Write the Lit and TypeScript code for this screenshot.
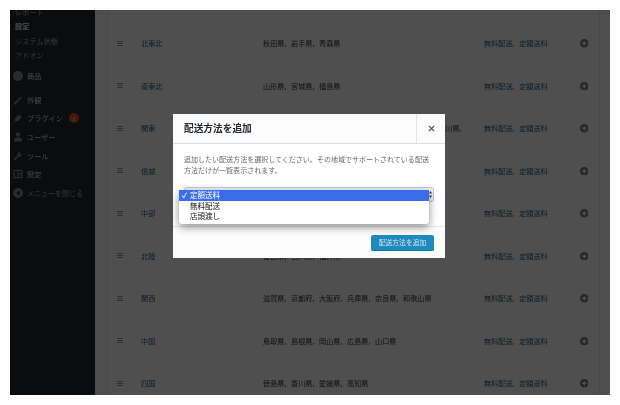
import { LitElement, html, css, svg } from "lit";
import { customElement } from "lit/decorators.js";

const rows: [string, string][] = [
  ["北東北", "秋田県, 岩手県, 青森県"],
  ["南東北", "山形県, 宮城県, 福島県"],
  ["関東", "茨城県, 栃木県, 群馬県, 埼玉県, 千葉県, 東京都, 神奈川県,"],
  ["信越", "新潟県, 長野県"],
  ["中部", "愛知県, 岐阜県, 静岡県, 三重県"],
  ["北陸", "富山県, 石川県, 福井県"],
  ["関西", "滋賀県, 京都府, 大阪府, 兵庫県, 奈良県, 和歌山県"],
  ["中国", "鳥取県, 島根県, 岡山県, 広島県, 山口県"],
  ["四国", "徳島県, 香川県, 愛媛県, 高知県"],
];

const icons: Record<string, unknown> = {
  product: svg`<circle cx="5" cy="5" r="5"/>`,
  brush: svg`<path d="M0.5 9.5 C1 7 2 6.5 3.2 6.3 L7.5 1.5 L8.8 2.7 L4.2 7.2 C4 8.6 2.5 9.6 0.5 9.5Z"/>`,
  plugin: svg`<path d="M0.5 9.5 L2.5 7.5 L1.8 5.5 L4 3.5 L4.6 1.2 L5.6 2.8 L8.5 1 L6.8 4 L9.5 4.2 L7 6 L5 8 L3 8 L1 10Z"/>`,
  user: svg`<circle cx="5" cy="2.6" r="2.1"/><path d="M1 9.5 V7.4 C1 6 3 5.4 5 5.4 C7 5.4 9 6 9 7.4 V9.5Z"/>`,
  tool: svg`<path d="M0.6 8.4 L4.6 4.2 C4 2.4 5.4 0.6 7.6 1 L6.2 2.6 L7.4 3.9 L9 2.4 C9.4 4.6 7.6 6 5.8 5.4 L1.8 9.6Z"/>`,
  settings: svg`<path fill-rule="evenodd" d="M0.5 0.8 H9.5 V9.2 H0.5Z M1.8 2 V8 H4.4 V2Z M5.6 2 V4.4 H8.2 V2Z M5.6 5.6 V8 H8.2 V5.6Z"/>`,
  collapse: svg`<path fill-rule="evenodd" d="M5 0 A5 5 0 1 1 5 10 A5 5 0 1 1 5 0Z M6.6 2.6 L3.2 5 L6.6 7.4Z"/>`,
};

@customElement("app-root")
export class AppRoot extends LitElement {
  static styles = css`
    :host {
      display: block;
      width: 620px;
      height: 405px;
      background: #fff;
      padding: 10px;
      box-sizing: border-box;
      font-family: "Noto Sans CJK JP", "Liberation Sans", sans-serif;
    }
    .frame {
      position: relative;
      width: 600px;
      height: 385px;
      overflow: hidden;
      display: flex;
      background: #f1f1f1;
      filter: blur(0.5px);
    }
    .side {
      width: 85px;
      flex: none;
      background: #23282d;
      color: #d4d4d4;
      font-size: 7.2px;
    }
    .sub {
      margin-top: -5px;
      padding: 0 0 0 5px;
      color: #a0a5aa;
      line-height: 14.4px;
      height: 59px;
    }
    .sub .cur { color: #eee; font-weight: 600; }
    .menu { display: flex; flex-direction: column; }
    .item {
      height: 18.6px;
      display: flex;
      align-items: center;
      gap: 4px;
      padding-left: 3px;
    }
    .item.first { margin-top: 3px; margin-bottom: 5px; }
    .item svg { width: 10px; height: 10px; fill: #82878c; flex: none; }
    .item.dim { color: #a0a5aa; font-size: 7px; }
    .badge {
      width: 10px;
      height: 10px;
      border-radius: 50%;
      background: #d54e21;
      color: #fff;
      font-size: 5px;
      display: flex;
      align-items: center;
      justify-content: center;
      margin-left: 2px;
    }
    .main { flex: 1; padding: 0 10px 0 12px; min-width: 0; }
    .table {
      border-left: 1px solid #e5e5e5;
      border-right: 1px solid #e5e5e5;
      background: #f4f4f4;
      padding-top: 12px;
      height: 100%;
      box-sizing: border-box;
    }
    .row {
      display: grid;
      grid-template-columns: 33px 122px 221px 95.5px 1fr;
      align-items: center;
      height: 42.5px;
      font-size: 7.15px;
      word-spacing: 3px;
      color: #333;
      white-space: nowrap;
    }
    .handle {
      margin-left: 9px;
      width: 6px;
      height: 5px;
      border-top: 1px solid #999;
      border-bottom: 1px solid #999;
      position: relative;
      box-sizing: border-box;
    }
    .handle::after {
      content: "";
      position: absolute;
      left: 0;
      right: 0;
      top: 1px;
      height: 1px;
      background: #999;
    }
    .name { color: #24607f; }
    .region { overflow: hidden; }
    .methods { color: #24607f; }
    .plus { width: 8.5px; height: 8.5px; display: block; }
    .plus path { fill: #777; }
    .overlay {
      position: absolute;
      inset: 0;
      background: rgba(0, 0, 0, 0.68);
    }
    .modal {
      position: absolute;
      left: 163px;
      top: 104px;
      width: 272px;
      height: 144px;
      background: #fff;
      display: flex;
      flex-direction: column;
    }
    .head {
      height: 29px;
      display: flex;
      align-items: stretch;
      border-bottom: 1px solid #ddd;
      background: #fcfcfc;
      flex: none;
    }
    .title {
      flex: 1;
      padding-left: 11px;
      font-size: 9.7px;
      font-weight: 700;
      color: #23282d;
      line-height: 28px;
    }
    .close {
      width: 28px;
      border-left: 1px solid #e5e5e5;
      display: flex;
      align-items: center;
      justify-content: center;
    }
    .close svg { width: 7px; height: 7px; stroke: #444; stroke-width: 1.3; }
    .body {
      flex: 1;
      padding: 10px 11px 0;
      font-size: 7.03px;
      line-height: 11px;
      color: #666;
    }
    .selectbox {
      margin-top: 11px;
      height: 15px;
      border: 1px solid #b5cde0;
      border-radius: 3px;
      background: #eef3f7;
      box-sizing: border-box;
      display: flex;
      justify-content: flex-end;
      align-items: center;
      padding-right: 1px;
    }
    .selectbox svg { width: 3px; height: 7px; fill: #333; }
    .foot {
      height: 31px;
      flex: none;
      border-top: 1px solid #e8e8e8;
      background: #fcfcfc;
      display: flex;
      justify-content: flex-end;
      align-items: center;
      padding-right: 11px;
    }
    .btn {
      width: 63px;
      height: 16px;
      border-radius: 2px;
      background: #1f8abc;
      border-bottom: 1px solid #0f6f9e;
      box-sizing: border-box;
      color: #cfe4ef;
      font-size: 6.8px;
      display: flex;
      align-items: center;
      justify-content: center;
    }
    .popup {
      position: absolute;
      left: 6px;
      top: 76px;
      width: 250px;
      height: 34px;
      background: #fff;
      border-radius: 0 0 3px 3px;
      box-shadow: 0 3px 8px rgba(0, 0, 0, 0.45);
      font-size: 7.5px;
      color: #111;
      line-height: 10.4px;
    }
    .opt { padding-left: 11px; height: 10.4px; position: relative; }
    .opt.on { background: #3a6ee8; color: #fff; height: 11px; }
    .check { position: absolute; left: 3px; top: 0; font-size: 7px; font-weight: 700; }
  `;

  render() {
    return html`
      <div class="frame">
        <nav class="side">
          <div class="sub">
            <div>レポート</div>
            <div class="cur">設定</div>
            <div>システム状態</div>
            <div>アドオン</div>
          </div>
          <div class="menu">
            ${this.item("product", "商品", "first")}
            ${this.item("brush", "外観")}
            <div class="item">
              <svg viewBox="0 0 10 10">${icons.plugin}</svg>
              <span>プラグイン</span><span class="badge">1</span>
            </div>
            ${this.item("user", "ユーザー")}
            ${this.item("tool", "ツール")}
            ${this.item("settings", "設定")}
            ${this.item("collapse", "メニューを閉じる", "dim")}
          </div>
        </nav>
        <main class="main">
          <div class="table">
            ${rows.map(
              ([name, region]) => html`
                <div class="row">
                  <span class="handle"></span>
                  <span class="name">${name}</span>
                  <span class="region">${region}</span>
                  <span class="methods">無料配送, 定額送料</span>
                  <svg class="plus" viewBox="0 0 10 10">
                    <path
                      fill-rule="evenodd"
                      d="M5 0 A5 5 0 1 1 5 10 A5 5 0 1 1 5 0Z M4.2 2.5 V4.2 H2.5 V5.8 H4.2 V7.5 H5.8 V5.8 H7.5 V4.2 H5.8 V2.5Z"
                    />
                  </svg>
                </div>
              `
            )}
          </div>
        </main>
        <div class="overlay"></div>
        <section class="modal">
          <header class="head">
            <div class="title">配送方法を追加</div>
            <div class="close">
              <svg viewBox="0 0 8 8"><path d="M1 1 L7 7 M7 1 L1 7" /></svg>
            </div>
          </header>
          <div class="body">
            追加したい配送方法を選択してください。その地域でサポートされている配送<br />方法だけが一覧表示されます。
            <div class="selectbox">
              <svg viewBox="0 0 3 7"><path d="M1.5 0 L3 2.6 H0Z M1.5 7 L3 4.4 H0Z" /></svg>
            </div>
          </div>
          <footer class="foot"><div class="btn">配送方法を追加</div></footer>
          <div class="popup">
            <div class="opt on"><span class="check">✓</span>定額送料</div>
            <div class="opt">無料配送</div>
            <div class="opt">店頭渡し</div>
          </div>
        </section>
      </div>
    `;
  }

  item(icon: string, label: string, cls = "") {
    return html`<div class="item ${cls}">
      <svg viewBox="0 0 10 10">${icons[icon]}</svg><span>${label}</span>
    </div>`;
  }
}
